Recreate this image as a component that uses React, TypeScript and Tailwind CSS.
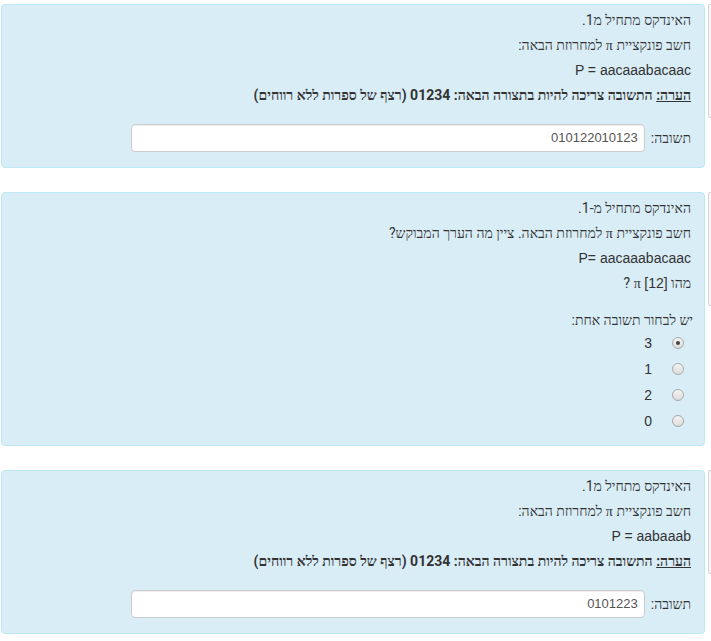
import React from 'react'

// Hebrew text uses the system Hebrew fallback (narrower than Liberation's), Latin parts use Liberation Sans
const font = { fontFamily: 'Roboto, serif' }

function Latin({ children }: { children: React.ReactNode }) {
  return <span className="font-['Liberation_Sans',Arial,sans-serif] leading-[14px]">{children}</span>
}

function Pi() {
  return <span className="font-['Liberation_Serif',serif] font-normal leading-[14px]">π</span>
}

function Line({ children, className = '' }: { children: React.ReactNode; className?: string }) {
  return <p className={`h-[20px] ${className}`}>{children}</p>
}

function Note() {
  return (
    <Line className="font-bold">
      <span className="underline">הערה:</span> התשובה צריכה להיות בתצורה הבאה: 01234 (רצף של ספרות ללא רווחים)
    </Line>
  )
}

function AnswerRow({ value }: { value: string }) {
  return (
    <div className="mt-[19px] flex items-center gap-[6px]">
      <span>תשובה:</span>
      <div className="h-[28px] w-[514px] rounded-[4px] border border-[#cccccc] bg-white px-[6px] font-['Liberation_Sans',Arial,sans-serif] text-[13px] leading-[26px] text-[#555555] shadow-[inset_0_1px_1px_rgba(0,0,0,0.075)]">
        {value}
      </div>
    </div>
  )
}

function Radio({ checked }: { checked?: boolean }) {
  return (
    <span className="flex h-[12px] w-[12px] items-center justify-center rounded-full border border-[#a9a9a9] bg-gradient-to-b from-[#f4f4f4] to-[#dcdcdc]">
      {checked && <span className="h-[4px] w-[4px] rounded-full bg-[#444444]" />}
    </span>
  )
}

function Box({ children, pb, info }: { children: React.ReactNode; pb: string; info: string }) {
  return (
    <div className="flex items-start">
      <div
        dir="rtl"
        className={`ml-[1px] w-[704px] shrink-0 rounded-[4px] border border-[#bce8f1] bg-[#d9edf7] pt-[5px] pr-[13px] pl-[10px] ${pb}`}
      >
        {children}
      </div>
      <div className={`ml-[3px] w-[100px] shrink-0 rounded-[2px] border border-[#d3d3d3] bg-[#f7f7f7] ${info}`} />
    </div>
  )
}

export default function App() {
  const options = [
    { v: '3', checked: true },
    { v: '1' },
    { v: '2' },
    { v: '0' },
  ]
  return (
    <div style={font} className="w-[711px] overflow-hidden bg-white pt-[4px] text-[14px] leading-[20px] text-[#333333]">
      <div className="flex flex-col gap-[24px]">
        <Box pb="pb-[15px]" info="h-[114px]">
          <div className="flex flex-col gap-[5px]">
            <Line>האינדקס מתחיל מ1.</Line>
            <Line>חשב פונקציית <Pi /> למחרוזת הבאה:</Line>
            <Line><Latin>P = aacaaabacaac</Latin></Line>
            <Note />
          </div>
          <AnswerRow value="010122010123" />
        </Box>

        <Box pb="pb-[11px]" info="h-[114px]">
          <div className="flex flex-col gap-[5px]">
            <Line>האינדקס מתחיל מ-1.</Line>
            <Line>חשב פונקציית <Pi /> למחרוזת הבאה. ציין מה הערך המבוקש?</Line>
            <Line><Latin>P= aacaaabacaac</Latin></Line>
            <Line>מהו <Latin>[12]</Latin> <Pi /> ?</Line>
          </div>
          <div className="mt-[17px]">
            <Line className="-mr-[2px]">יש לבחור תשובה אחת:</Line>
            <div className="flex flex-col pr-[7px]">
              {options.map((o) => (
                <div key={o.v} className="flex h-[26px] items-center gap-[20px]">
                  <Radio checked={o.checked} />
                  <Latin>{o.v}</Latin>
                </div>
              ))}
            </div>
          </div>
        </Box>

        <Box pb="pb-[15px]" info="h-[104px]">
          <div className="flex flex-col gap-[5px]">
            <Line>האינדקס מתחיל מ1.</Line>
            <Line>חשב פונקציית <Pi /> למחרוזת הבאה:</Line>
            <Line><Latin>P = aabaaab</Latin></Line>
            <Note />
          </div>
          <AnswerRow value="0101223" />
        </Box>
      </div>
    </div>
  )
}
